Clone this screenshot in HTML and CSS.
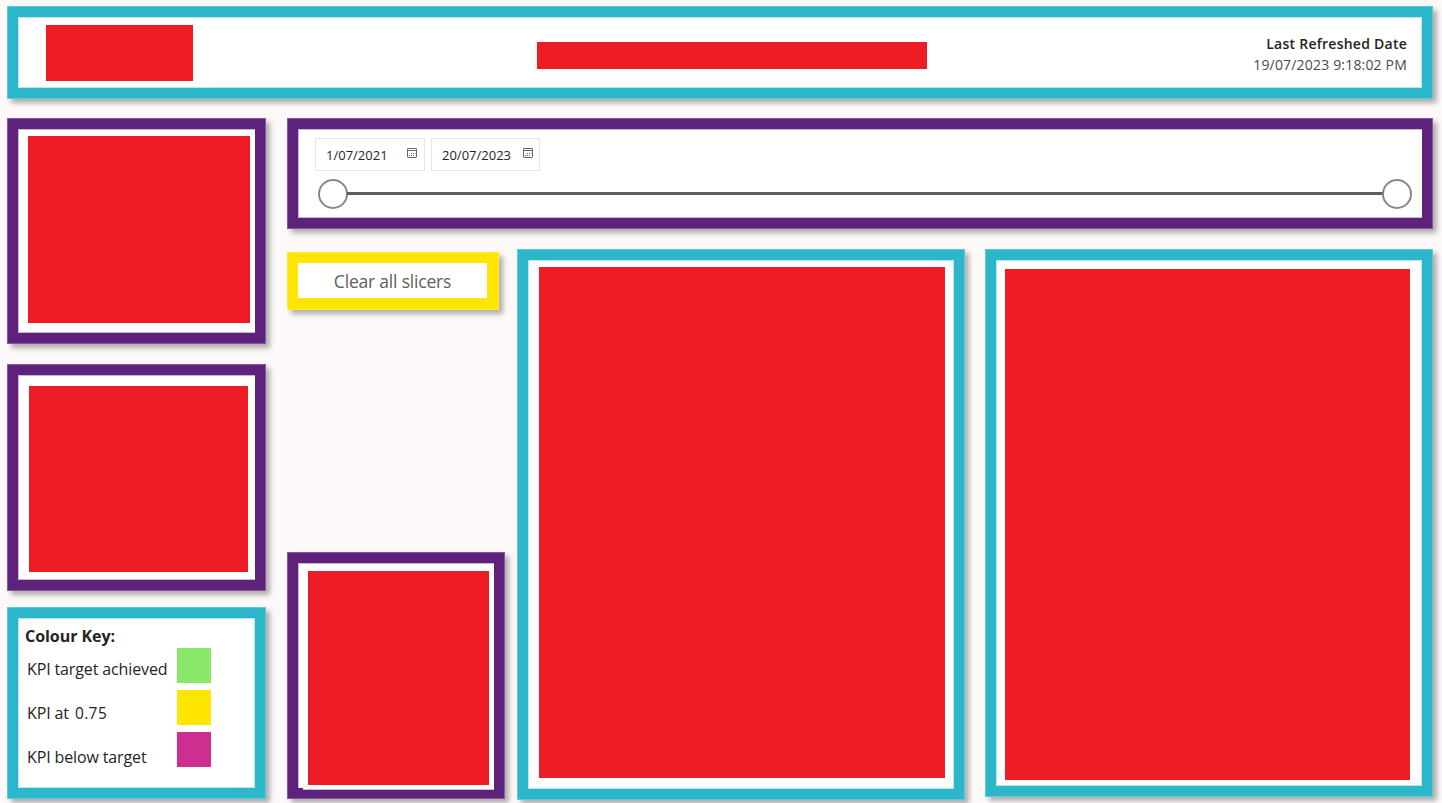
FILE: index.html
```html
<!DOCTYPE html>
<html lang="en">
<head>
<meta charset="utf-8">
<title>KPI report</title>
<link rel="stylesheet" href="styles.css">
</head>
<body>
<header class="panel teal header">
  <div class="inner">
    <div class="block logo"></div>
    <div class="block title"></div>
    <div class="refreshed">
      <strong>Last Refreshed Date</strong>
      <span>19/07/2023 9:18:02 PM</span>
    </div>
  </div>
</header>
<div class="body">
  <aside class="left">
    <section class="panel purple first"><div class="inner"><div class="block"></div></div></section>
    <section class="panel purple second"><div class="inner"><div class="block"></div></div></section>
    <section class="panel teal key">
      <div class="inner">
        <h2>Colour Key:</h2>
        <div class="row"><span class="label">KPI target achieved</span><i class="swatch green"></i></div>
        <div class="row"><span class="label t-at">KPI at <span class="value">0.75</span></span><i class="swatch yellow-fill"></i></div>
        <div class="row"><span class="label t-below">KPI below target</span><i class="swatch magenta"></i></div>
      </div>
    </section>
  </aside>
  <main class="main">
    <section class="panel purple slicer">
      <div class="inner">
        <div class="dates">
          <div class="date from"><span>1/07/2021</span>
            <svg class="cal" viewBox="0 0 12 12"><rect x="1.5" y="1.5" width="9" height="9" rx=".6"/><path d="M1.5 3.5h9M5 6.5h1M7 6.5h1M9 6.5h.6M3 8.5h1M5 8.5h1M7 8.5h1"/></svg>
          </div>
          <div class="date to"><span>20/07/2023</span>
            <svg class="cal" viewBox="0 0 12 12"><rect x="1.5" y="1.5" width="9" height="9" rx=".6"/><path d="M1.5 3.5h9M5 6.5h1M7 6.5h1M9 6.5h.6M3 8.5h1M5 8.5h1M7 8.5h1"/></svg>
          </div>
        </div>
        <div class="slider"><i class="knob"></i><i class="track"></i><i class="knob"></i></div>
      </div>
    </section>
    <div class="charts">
      <div class="narrow">
        <div class="panel yellow clear"><div class="inner"><span>Clear all slicers</span></div></div>
        <section class="panel purple small"><div class="inner"><div class="block"></div></div></section>
      </div>
      <section class="panel teal middle"><div class="inner"><div class="block"></div></div></section>
      <section class="panel teal right"><div class="inner"><div class="block"></div></div></section>
    </div>
  </main>
</div>
</body>
</html>
```

FILE: styles.css
```css
* { box-sizing: border-box; }
body {
  margin: 0;
  height: 803px;
  overflow: hidden;
  padding: 6px 9px 0 7px;
  background: #fdf9f8;
  color: #252423;
  font-family: "Open Sans", "Noto Sans", sans-serif;
}
.panel {
  padding: 11px;
  box-shadow: inset 0 0 0 1px rgba(255, 255, 255, .25), 4px 4px 5px rgba(0, 0, 0, .3);
}
.teal { background: #2bb7c9; }
.purple { background: #5e227c; }
.yellow { background: #ffe500; }
.inner { height: 100%; background: #fff; }
.teal > .inner { box-shadow: inset 0 0 0 1px #b9e7ed; }
.purple > .inner { box-shadow: inset 1px 1px 0 #c9b8d3, inset 0 -1px 0 #c9b8d3; }
.block { background: #ee1c25; }

.header { width: 1426px; height: 93px; }
.header .inner { display: flex; padding: 8px 15px 0 28px; }
.logo { width: 147px; height: 56px; }
.title { width: 390px; height: 27px; margin: 17px 0 0 344px; }
.refreshed {
  margin: 8px 0 0 auto;
  text-align: right;
  font-size: 14px;
  line-height: 21px;
  white-space: nowrap;
}
.refreshed strong, .refreshed span { display: block; }
.refreshed strong { font-weight: 600; letter-spacing: .25px; }
.refreshed span { font-weight: 400; letter-spacing: .18px; color: #4a4948; }

.body { display: grid; grid-template-columns: 259px 1146px; column-gap: 21px; margin-top: 19px; }
.left { display: flex; flex-direction: column; }
.first { height: 226px; }
.first .inner { padding: 7px 5px 10px 10px; }
.first .block { width: 222px; height: 187px; }
.second { height: 227px; margin-top: 20px; }
.second .inner { padding: 11px 0 0 11px; }
.second .block { width: 219px; height: 186px; }
.key { height: 192px; margin-top: 16px; }
.key .inner { padding: 7px 0 0 9px; }
.key h2 { margin: 0 0 0 -2px; height: 23px; font-size: 16px; line-height: 23px; font-weight: 700; letter-spacing: -.05px; }
.row { display: flex; width: 184px; height: 35px; margin-bottom: 7px; justify-content: space-between; }
.label { font-size: 16px; line-height: 43px; letter-spacing: -.13px; white-space: nowrap; }
.t-at { line-height: 47px; }
.t-below { line-height: 51px; }
.value { margin-left: 2px; font-size: 15.5px; letter-spacing: .4px; }
.swatch { width: 34px; height: 35px; }
.green { background: #8ae769; }
.yellow-fill { background: #ffe500; }
.magenta { background: #cf2e91; }

.slicer { height: 111px; }
.slicer .inner { padding: 9px 10px 0 17px; }
.dates { display: flex; gap: 6px; }
.date {
  display: flex;
  width: 110px;
  height: 33px;
  padding: 0 6px 0 10px;
  border: 1px solid #e6e6e6;
  justify-content: space-between;
  font-size: 13px;
  line-height: 33px;
}
.date.to { width: 109px; padding-right: 5px; }
.cal { width: 12px; height: 12px; margin-top: 8px; fill: none; stroke: #666; stroke-width: 1; }
.slider { display: flex; align-items: center; height: 30px; margin: 8px 0 0 3px; }
.knob { width: 30px; height: 30px; border: 2px solid #888; border-radius: 50%; background: #fff; flex: none; }
.track { flex: 1; height: 3px; margin: -1px -1px 0; background: #605e5c; }

.charts { display: flex; align-items: flex-start; margin-top: 20px; }
.narrow { width: 230px; }
.clear { width: 212px; height: 58px; margin-top: 3px; padding: 11px 12px 12px 11px; }
.clear .inner { font-size: 17.5px; line-height: 37px; letter-spacing: -.2px; text-align: center; color: #605e5c; }
.small { width: 218px; height: 247px; margin-top: 242px; }
.small .inner {
  height: 227px;
  padding: 8px 0 0 10px;
  clip-path: polygon(0 0, 100% 0, 100% 100%, 5px 100%, 5px 225px, 0 225px);
}
.small .block { width: 181px; height: 214px; }
.middle { width: 448px; height: 551px; }
.middle .inner { padding: 7px 0 0 11px; }
.middle .block { width: 406px; height: 511px; }
.right { width: 448px; height: 548px; margin-left: 20px; }
.right .inner { padding: 9px 0 0 9px; }
.right .block { width: 405px; height: 511px; }
```
